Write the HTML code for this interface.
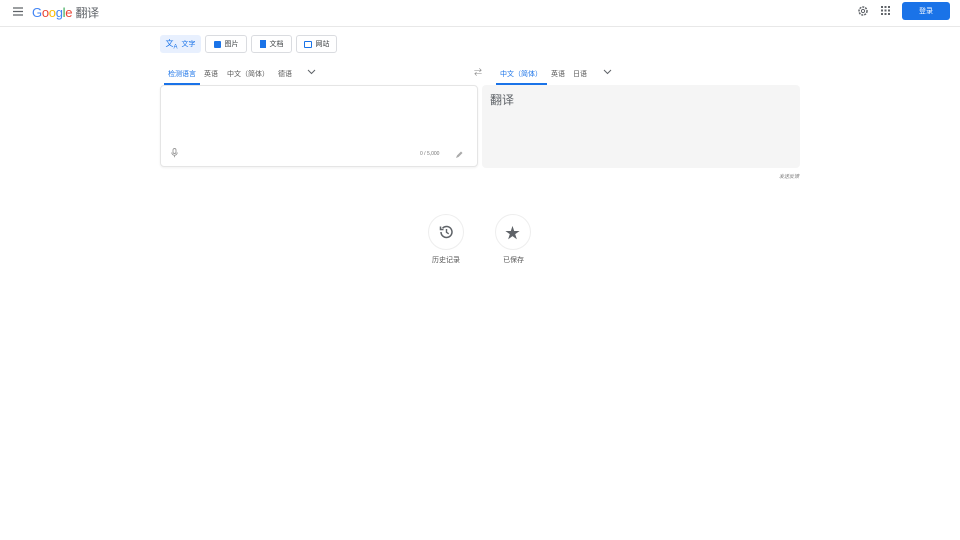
<!DOCTYPE html>
<html><head><meta charset="utf-8"><style>
*{box-sizing:border-box;margin:0;padding:0}
body{width:960px;height:540px;background:#fff;font-family:"Liberation Sans","Noto Sans CJK SC",sans-serif;position:relative;overflow:hidden;color:#444}
.a{position:absolute}
.hdr{left:0;top:0;width:960px;height:27px;border-bottom:1px solid #e8e8e8}
.btn{height:18px;border:1px solid #dadce0;border-radius:3px;font-size:7px;display:flex;align-items:center;justify-content:center;gap:4px;color:#3c4043;top:35px}
.tab{font-size:7px;top:69px;color:#555}
.blue{color:#1a73e8}
</style></head><body>
<div class="a hdr"></div>
<svg class="a" style="left:13px;top:7px" width="10" height="9"><path d="M0 1h10M0 4.5h10M0 8h10" stroke="#5f6368" stroke-width="1.2"/></svg>
<div class="a" style="left:32px;top:4px;font-size:13px;letter-spacing:-0.3px"><span style="color:#4285f4">G</span><span style="color:#ea4335">o</span><span style="color:#fbbc05">o</span><span style="color:#4285f4">g</span><span style="color:#34a853">l</span><span style="color:#ea4335">e</span> <span style="color:#5f6368;font-size:12px">翻译</span></div>
<svg class="a" style="left:857px;top:5px" width="12" height="12" viewBox="0 0 12 12"><circle cx="6" cy="6" r="4" fill="none" stroke="#5f6368" stroke-width="1.5" stroke-dasharray="2 1"/><circle cx="6" cy="6" r="1.6" fill="none" stroke="#5f6368" stroke-width="1"/></svg>
<svg class="a" style="left:881px;top:6px" width="9" height="9"><g fill="#5f6368"><rect x="0" y="0" width="2" height="2"/><rect x="3.5" y="0" width="2" height="2"/><rect x="7" y="0" width="2" height="2"/><rect x="0" y="3.5" width="2" height="2"/><rect x="3.5" y="3.5" width="2" height="2"/><rect x="7" y="3.5" width="2" height="2"/><rect x="0" y="7" width="2" height="2"/><rect x="3.5" y="7" width="2" height="2"/><rect x="7" y="7" width="2" height="2"/></g></svg>
<div class="a" style="left:902px;top:2px;width:48px;height:18px;background:#1a73e8;border-radius:3px;color:#fff;font-size:7px;display:flex;align-items:center;justify-content:center">登录</div>

<div class="a btn" style="left:160px;width:41px;background:#e8f0fe;border-color:#e8f0fe;color:#1a73e8"><span style="font-size:8px">文<sub style="font-size:6px">A</sub></span>文字</div>
<div class="a btn" style="left:205px;width:42px"><span style="width:7px;height:7px;background:#1a73e8;border-radius:1px;display:inline-block"></span>图片</div>
<div class="a btn" style="left:251px;width:41px"><span style="width:6px;height:8px;background:#1a73e8;display:inline-block"></span>文档</div>
<div class="a btn" style="left:296px;width:41px"><span style="width:8px;height:7px;border:1.3px solid #1a73e8;border-radius:1px;display:inline-block"></span>网站</div>

<div class="a tab blue" style="left:168px">检测语言</div>
<div class="a" style="left:164px;top:83px;width:36px;height:2px;background:#1a73e8"></div>
<div class="a tab" style="left:204px">英语</div>
<div class="a tab" style="left:227px">中文（简体）</div>
<div class="a tab" style="left:278px">德语</div>
<svg class="a" style="left:307px;top:69px" width="9" height="6"><path d="M1 1l3.5 3.5L8 1" fill="none" stroke="#5f6368" stroke-width="1"/></svg>
<div class="a" style="left:474px;top:67px;font-size:8px;color:#888">⇄</div>
<div class="a tab blue" style="left:500px">中文（简体）</div>
<div class="a" style="left:496px;top:83px;width:51px;height:2px;background:#1a73e8"></div>
<div class="a tab" style="left:551px">英语</div>
<div class="a tab" style="left:573px">日语</div>
<svg class="a" style="left:603px;top:69px" width="9" height="6"><path d="M1 1l3.5 3.5L8 1" fill="none" stroke="#5f6368" stroke-width="1"/></svg>

<div class="a" style="left:160px;top:85px;width:318px;height:82px;border:1px solid #e5e5e5;border-radius:4px;box-shadow:0 1px 2px rgba(0,0,0,.06)"></div>
<svg class="a" style="left:171px;top:148px" width="7" height="10"><rect x="2" y="0.5" width="3" height="5" rx="1.5" fill="none" stroke="#999" stroke-width=".9"/><path d="M0.7 4.5a2.8 2.8 0 0 0 5.6 0M3.5 7.3v2" fill="none" stroke="#999" stroke-width=".9"/></svg>
<div class="a" style="left:420px;top:151px;font-size:5px;color:#777">0 / 5,000</div>
<svg class="a" style="left:455px;top:151px" width="8" height="8"><path d="M1 7l1-2.5L6 0.5l1.5 1.5-4 4z" fill="#aaa"/></svg>

<div class="a" style="left:482px;top:85px;width:318px;height:83px;background:#f5f5f5;border-radius:4px"></div>
<div class="a" style="left:490px;top:91px;font-size:12px;color:#5f6368">翻译</div>
<div class="a" style="left:779px;top:173px;font-size:5px;color:#777;font-style:italic">发送反馈</div>

<div class="a" style="left:428px;top:214px;width:36px;height:36px;border:1px solid #eee;border-radius:50%"></div>
<svg class="a" style="left:438px;top:224px" width="16" height="16" viewBox="0 0 16 16"><path d="M3 8a5.5 5.5 0 1 0 1.6-3.9" fill="none" stroke="#5f6368" stroke-width="1.5"/><path d="M2.5 2.5v3h3" fill="none" stroke="#5f6368" stroke-width="1.5"/><path d="M8.5 5v3.3l2.2 1.5" fill="none" stroke="#5f6368" stroke-width="1.4"/></svg>
<div class="a" style="left:432px;top:255px;font-size:7px;color:#555">历史记录</div>
<div class="a" style="left:495px;top:214px;width:36px;height:36px;border:1px solid #eee;border-radius:50%"></div>
<div class="a" style="left:505px;top:222px;font-size:15px;color:#5f6368">★</div>
<div class="a" style="left:503px;top:255px;font-size:7px;color:#555">已保存</div>
</body></html>
